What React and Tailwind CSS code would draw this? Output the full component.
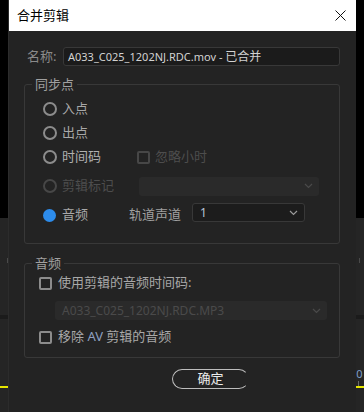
import React from "react";

const font = "font-['Noto_Sans','Noto_Sans_CJK_SC',sans-serif]";

const Chevron = ({ color = "#8a8a8a" }) => (
  <svg width="9" height="6" viewBox="0 0 9 6" fill="none">
    <path d="M1 1l3.5 3.5L8 1" stroke={color} strokeWidth="1.2" />
  </svg>
);

const Radio = ({ checked, disabled }) => {
  if (checked) {
    return <span className="w-[13px] h-[13px] rounded-full bg-[#2d8ceb] shrink-0" />;
  }
  return (
    <span
      className={`w-[14px] h-[14px] rounded-full border-[2.5px] shrink-0 ${
        disabled ? "border-[#474747]" : "border-[#8c8c8c]"
      }`}
    />
  );
};

const Check = ({ disabled }) => (
  <span
    className={`w-[13px] h-[13px] rounded-[2px] border-2 shrink-0 ${
      disabled ? "border-[#474747]" : "border-[#8c8c8c]"
    }`}
  />
);

// 背景里露出来的面板边
function SideStrip({ right }) {
  return (
    <div className="w-[8px] flex flex-col shrink-0 bg-[#252525] overflow-hidden">
      <div className="h-[218px] bg-black" />
      <div className="h-[40px]" />
      <div className={`h-[5px] w-px bg-[#4a4a4a] ${right ? "ml-[3px]" : "ml-[7px]"}`} />
      <div className="h-[52px]" />
      <div className="h-[4px] bg-[#1b1b1b]" />
      {right ? (
        <>
          <div className="h-[48px]" />
          <div className="h-[14px] text-[11px] leading-[14px] text-[#7f9fc8] -ml-[6px] whitespace-nowrap">
            10
          </div>
          <div className="h-[5px] w-px ml-[2px] bg-[#6a6a6a]" />
        </>
      ) : (
        <div className="h-[67px]" />
      )}
      <div className="h-[2px] bg-[#e6e600]" />
    </div>
  );
}

function Select({ value, width, disabled, textClass = "" }) {
  return (
    <div
      className={`flex items-center justify-between h-[19px] rounded-[3px] pl-[7px] pr-[6px] ${
        disabled ? "bg-[#2a2a2a]" : "bg-[#1c1c1c] border border-[#383838]"
      } ${width}`}
    >
      <span className={`text-[12px] leading-none ${textClass}`}>{value}</span>
      <Chevron color={disabled ? "#4a4a4a" : "#9a9a9a"} />
    </div>
  );
}

export default function App() {
  return (
    <div className={`w-[364px] h-[412px] flex overflow-hidden bg-black ${font}`}>
      <SideStrip />

      <div className="w-[348px] flex flex-col bg-[#232323] border-l border-[#2c2c2c]">
        {/* 标题栏 */}
        <div className="h-[31px] bg-white flex items-center justify-between pl-[8px] pr-[10px]">
          <span className="text-[13px] text-black">合并剪辑</span>
          <svg width="11" height="11" viewBox="0 0 11 11">
            <path d="M0.5 0.5l10 10M10.5 0.5l-10 10" stroke="#111" strokeWidth="1" />
          </svg>
        </div>

        <div className="flex flex-col pt-[16px] pl-[15px] pr-[16px]">
          {/* 名称 */}
          <div className="flex items-center h-[19px]">
            <span className="w-[39px] pl-[3px] text-[13px] text-[#8a8a8a]">名称:</span>
            <div className="flex-1 h-[19px] bg-[#1b1b1b] border border-[#383838] rounded-[3px] flex items-center pl-[4px]">
              <span className="text-[11px] text-[#d2d2d2] whitespace-nowrap">
                A033_C025_1202NJ.RDC.mov - <span className="text-[12px]">已合并</span>
              </span>
            </div>
          </div>

          {/* 同步点 */}
          <fieldset className="mt-[9px] border border-[#383838] rounded-[3px]">
            <legend className="ml-[7px] px-[3px] text-[13px] leading-[18px] text-[#a0a0a0]">同步点</legend>
            <div className="pt-[4px] pl-[18px] pb-[16px] flex flex-col text-[13px]">
              <div className="h-[24px] flex items-center gap-[5px]">
                <Radio />
                <span className="text-[#a8a8a8]">入点</span>
              </div>
              <div className="h-[24px] flex items-center gap-[5px]">
                <Radio />
                <span className="text-[#a8a8a8]">出点</span>
              </div>
              <div className="h-[24px] flex items-center">
                <div className="w-[94px] flex items-center gap-[5px]">
                  <Radio />
                  <span className="text-[#b0b0b0]">时间码</span>
                </div>
                <Check disabled />
                <span className="ml-[5px] text-[#4d4d4d]">忽略小时</span>
              </div>
              <div className="mt-[5px] h-[24px] flex items-center">
                <div className="w-[96px] flex items-center gap-[5px]">
                  <Radio disabled />
                  <span className="text-[#4d4d4d]">剪辑标记</span>
                </div>
                <Select value="" width="w-[180px]" disabled />
              </div>
              <div className="mt-[5px] h-[24px] flex items-center">
                <div className="w-[86px] flex items-center gap-[5px]">
                  <Radio checked />
                  <span className="text-[#a8a8a8] ml-[1px]">音频</span>
                </div>
                <span className="w-[63px] text-[#a0a0a0]">轨道声道</span>
                <div className="-mt-[5px]">
                  <Select value="1" width="w-[113px]" textClass="text-[#b8c4d8]" />
                </div>
              </div>
            </div>
          </fieldset>

          {/* 音频 */}
          <fieldset className="mt-[10px] border border-[#383838] rounded-[3px]">
            <legend className="ml-[7px] px-[3px] text-[13px] leading-[18px] text-[#a0a0a0]">音频</legend>
            <div className="pl-[14px] pb-[9px] flex flex-col text-[13px]">
              <div className="h-[22px] flex items-center gap-[6px]">
                <Check />
                <span className="text-[#a8a8a8]">使用剪辑的音频时间码:</span>
              </div>
              <div className="mt-[7px] ml-[16px]">
                <Select
                  value="A033_C025_1202NJ.RDC.MP3"
                  width="w-[272px]"
                  disabled
                  textClass="text-[#4a4a4a]"
                />
              </div>
              <div className="mt-[6px] h-[22px] flex items-center gap-[6px]">
                <Check />
                <span className="text-[#a8a8a8]">
                  移除 <span className="text-[#8ea0c0]">AV</span> 剪辑的音频
                </span>
              </div>
            </div>
          </fieldset>

          <div className="mt-[11px] flex pl-[148px]">
            <button className="w-[77px] h-[20px] rounded-full border-[1.5px] border-[#bdbdbd] border-r-transparent flex items-center justify-center text-[13px] text-[#ececec]">
              确定
            </button>
          </div>
        </div>
      </div>

      <SideStrip right />
    </div>
  );
}
